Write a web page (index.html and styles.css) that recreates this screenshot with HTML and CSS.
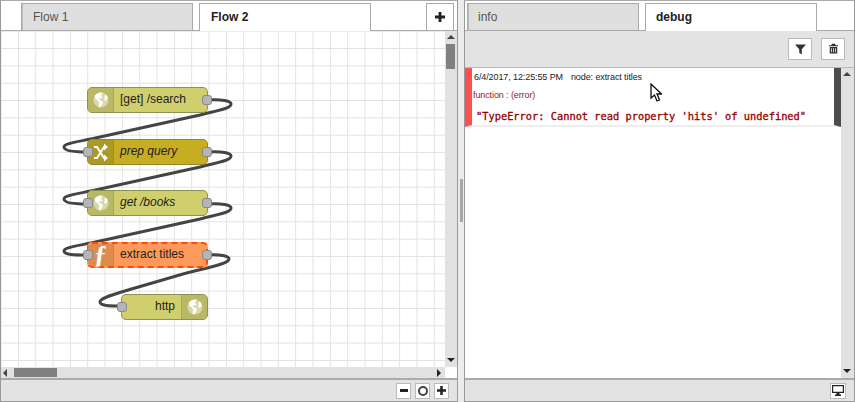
FILE: index.html
```html
<!DOCTYPE html>
<html lang="en">
<head>
<meta charset="utf-8">
<title>Node-RED flow editor</title>
<link rel="stylesheet" href="styles.css">
</head>
<body>
<svg class="defs" width="0" height="0" aria-hidden="true">
  <symbol id="globe" viewBox="0 0 16 16">
    <circle cx="8" cy="8" r="7.6" fill="#fff" opacity=".45"/>
    <path fill="#fff" d="M8 .4a7.600 7.600 0 0 0-6.400 3.500L2.600 7l2.600 1.600 1 2.600-.6 3.600 1.400.8 2.400-3.400.6-2.800-2.800-1.200-1.600-1.600 1.600-.6 1.200.8 1-1.400-1.400-1.200L9.400.5zM11 7.200l1.400 1.800.8-.8 1.400-1.600-.4-2.600-1.600-1.200-1.400 1.600.8 1.400z"/>
  </symbol>
  <symbol id="plus" viewBox="0 0 10 10">
    <path fill="#222" d="M3.600 0h2.800v3.600H10v2.800H6.400V10H3.600V6.400H0V3.600h3.600z"/>
  </symbol>
</svg>
<div class="app">
  <section class="panel left">
    <div class="tabbar">
      <div class="tab inactive">Flow 1</div>
      <div class="tab active">Flow 2</div>
      <button class="add-tab"><svg class="plus-big"><use href="#plus"/></svg></button>
    </div>
    <div class="work">
      <div class="work-main">
        <div class="canvas">
          <svg class="wires" viewBox="1 31 444 336" width="444" height="336">
            <path d="M207 100C222 99 231 101 231 104C231 109 215 111 200 115L100 137C78 142 64 143 64 147C64 151 75 152 87 152"/>
            <path d="M207 152C222 151 231 153 231 156C231 161 215 163 200 167L100 189C78 194 64 195 64 199C64 203 75 204 87 204"/>
            <path d="M207 204C222 203 231 205 231 208C231 213 215 215 200 219L100 241C78 246 64 247 64 251C64 255 75 255 87 255"/>
            <path d="M207 255C220 254 229 256 229 259C229 264 210 267 183 274L135 288C112 295 100 298 100 302C100 306 110 306 121 306"/>
          </svg>
          <div class="node n-search inject">
            <span class="icon"><svg class="globe"><use href="#globe"/></svg></span>
            <span class="label">[get] /search</span>
            <i class="port out"></i>
          </div>
          <div class="node n-prep change">
            <i class="port in"></i>
            <span class="icon">
              <svg class="shuffle" viewBox="0 0 14 19"><path d="M0 4h3L10 15h1M0 15h3L10 4h1"/><path class="tip" d="M10 .5L14 4l-4 3.500zM10 11.500l4 3.500-4 3.500z"/></svg>
            </span>
            <span class="label em">prep query</span>
            <i class="port out"></i>
          </div>
          <div class="node n-books inject">
            <i class="port in"></i>
            <span class="icon"><svg class="globe"><use href="#globe"/></svg></span>
            <span class="label em">get /books</span>
            <i class="port out"></i>
          </div>
          <div class="node n-extract fn">
            <i class="port in"></i>
            <span class="icon func">ƒ</span>
            <span class="label">extract titles</span>
            <i class="port out"></i>
          </div>
          <div class="node n-http inject rev">
            <i class="port in"></i>
            <span class="label">http</span>
            <span class="icon"><svg class="globe"><use href="#globe"/></svg></span>
          </div>
        </div>
        <div class="vbar">
          <i class="arrow up"></i>
          <div class="vthumb"></div>
          <i class="arrow down"></i>
        </div>
      </div>
      <div class="hrow">
        <div class="hbar">
          <i class="arrow lft"></i>
          <div class="hthumb"></div>
          <i class="arrow rgt"></i>
        </div>
        <div class="corner"></div>
      </div>
    </div>
    <div class="foot foot-left">
      <button class="mini"><span class="minus"></span></button>
      <button class="mini"><span class="ring"></span></button>
      <button class="mini"><svg class="plus-small"><use href="#plus"/></svg></button>
    </div>
  </section>
  <div class="sep"><div class="grip"></div></div>
  <section class="panel right">
    <div class="tabbar">
      <div class="tab inactive">info</div>
      <div class="tab active">debug</div>
    </div>
    <div class="toolbar">
      <button class="tool">
        <svg class="tool-ico" viewBox="0 0 12 12"><path d="M0 1h12L7.400 6.400V12L4.600 10V6.400z"/></svg>
      </button>
      <button class="tool">
        <svg class="tool-ico trash" viewBox="0 0 12 13"><path d="M4 0h4l1 2h3v1.500H0V2h3zM1 4.500h10V13H1zM3 6v5.500h1V6zM5.500 6v5.500h1V6zM8 6v5.500h1V6z" fill-rule="evenodd"/></svg>
      </button>
    </div>
    <div class="debug">
      <div class="messages">
        <div class="msg">
          <div class="meta"><span>6/4/2017, 12:25:55 PM</span><span>node: extract titles</span></div>
          <div class="src">function : (error)</div>
          <div class="payload">"TypeError: Cannot read property 'hits' of undefined"</div>
        </div>
        <svg class="cursor" viewBox="0 0 12 19"><path d="M1 1v14l3.500-3 2.500 6 2.500-1-2.500-6h4.500z"/></svg>
      </div>
      <div class="vbar vbar-debug">
        <i class="arrow up"></i>
        <i class="arrow down"></i>
      </div>
    </div>
    <div class="foot foot-right">
      <button class="mini mini-wide">
        <svg class="monitor" viewBox="0 0 12 11"><path d="M0 0h12v8H7.500v1.500H9V11H3V9.500h1.500V8H0zM1.200 1.200v5.600h9.600V1.200z" fill-rule="evenodd"/></svg>
      </button>
    </div>
  </section>
</div>
</body>
</html>
```

FILE: styles.css
```css
* { box-sizing: border-box; }
html, body { margin: 0; padding: 0; }
body {
  width: 855px;
  height: 402px;
  overflow: hidden;
  background: #fff;
  font-family: "Liberation Sans", Arial, sans-serif;
}
.defs { position: absolute; }
button { padding: 0; margin: 0; font: inherit; cursor: pointer; }

.app { display: flex; width: 855px; height: 402px; }
.panel {
  display: flex;
  flex-direction: column;
  border: 1px solid #999;
  border-top-color: #aaa;
  background: #fff;
}
.left { width: 458px; }
.right { flex: 1; min-width: 0; }
.sep {
  width: 6px;
  display: flex;
  align-items: center;
  justify-content: center;
  background: #ececec;
}
.grip { width: 3px; height: 43px; background: #a6a6a6; margin-top: -2px; }

.tabbar {
  height: 30px;
  flex: none;
  display: flex;
  align-items: flex-end;
  gap: 6px;
  border-bottom: 1px solid #aaa;
}
.left .tabbar { padding-left: 20px; }
.right .tabbar { padding-left: 2px; }
.tab {
  width: 172px;
  height: 27px;
  padding: 6px 0 0 11px;
  font-size: 12px;
  line-height: 14px;
  border: 1px solid #aaa;
  border-bottom: 0;
}
.right .tab { padding-left: 10px; }
.tab.inactive {
  background: #dfdfdf;
  color: #555;
  box-shadow: inset 1px 0 0 #bbb;
}
.tab.active {
  background: #fff;
  color: #222;
  font-weight: bold;
  height: 28px;
  margin-bottom: -1px;
}
.add-tab {
  width: 28px;
  height: 27px;
  margin-left: auto;
  margin-right: 3px;
  display: flex;
  align-items: center;
  justify-content: center;
  background: #fff;
  border: 1px solid #aaa;
  border-bottom: 0;
}
.plus-big { width: 10px; height: 10px; }
.plus-small { width: 9px; height: 9px; }

.work { flex: 1; min-height: 0; display: flex; flex-direction: column; }
.work-main { flex: 1; min-height: 0; display: flex; }
.canvas {
  position: relative;
  flex: 1;
  overflow: hidden;
  background-color: #fff;
  background-image:
    linear-gradient(#e2e2e2 1.3px, transparent 1.3px),
    linear-gradient(90deg, #e2e2e2 1.3px, transparent 1.3px);
  background-size: 17.33px 17.33px;
  background-position: -0.4px -0.3px;
}
.wires { position: absolute; left: 0; top: 0; }
.wires path { fill: none; stroke: #444; stroke-width: 3; }

.node {
  position: absolute;
  display: flex;
  align-items: stretch;
  height: 26px;
  border: 1px solid #8f8f5a;
  border-radius: 5px;
  font-size: 12px;
  color: #222;
}
.n-search { left: 86px; top: 56px; width: 121px; }
.n-prep { left: 86px; top: 108px; width: 121px; }
.n-books { left: 86px; top: 159px; width: 121px; }
.n-extract { left: 86px; top: 211px; width: 121px; }
.n-http { left: 120px; top: 263px; width: 87px; }

.inject { background: #cfcf6e; }
.inject .icon { background: #b8b865; }
.change { background: #c6ad22; border-color: #94852f; }
.change .icon { background: #ac9a26; }
.fn {
  background: #fd9a5b;
  border: 2px dashed #ff4a0c;
}
.fn .icon { background: #dd8c50; margin-left: -1px; }

.icon {
  flex: none;
  width: 26px;
  display: flex;
  align-items: center;
  justify-content: center;
  border-radius: 4px 0 0 4px;
  border-right: 1px solid rgba(0, 0, 0, .08);
}
.rev .icon { border-radius: 0 4px 4px 0; border-right: 0; border-left: 1px solid rgba(0, 0, 0, .08); }
.label { flex: 1; padding-left: 6px; line-height: 23px; white-space: nowrap; }
.em { font-style: italic; }
.rev .label { text-align: right; padding: 0 6px 0 0; }
.fn .label { line-height: 21px; }
.globe { width: 16px; height: 16px; }
.shuffle { width: 14px; height: 19px; }
.shuffle path { fill: none; stroke: #fff; stroke-width: 2; }
.shuffle .tip { fill: #fff; stroke: none; }
.func {
  color: #fff;
  font-family: "Liberation Serif", serif;
  font-weight: bold;
  font-size: 26px;
  line-height: 22px;
}
.port {
  position: absolute;
  top: 7px;
  width: 10px;
  height: 10px;
  border-radius: 3px;
  background: #b5b5b5;
  border: 1px solid #888;
}
.port.out { right: -5px; }
.port.in { left: -5px; }
.fn .port { top: 6px; }
.fn .port.out { right: -6px; }
.fn .port.in { left: -6px; }

.vbar {
  position: relative;
  flex: none;
  width: 12px;
  background: #e1e1e1;
}
.vthumb {
  position: absolute;
  left: 1px;
  top: 13px;
  width: 9px;
  height: 25px;
  background: #808080;
}
.hrow { flex: none; height: 11px; display: flex; }
.hbar { position: relative; flex: 1; background: #e1e1e1; }
.hthumb {
  position: absolute;
  left: 13px;
  top: 1px;
  width: 43px;
  height: 9px;
  background: #808080;
}
.corner { width: 12px; background: #fff; }
.arrow { position: absolute; width: 0; height: 0; border: 0 solid transparent; }
.up { top: 4px; left: 2px; border-width: 0 4px 4px; border-bottom-color: #444; }
.down { bottom: 5px; left: 2px; border-width: 4px 4px 0; border-top-color: #222; }
.lft { left: 2px; top: 2px; border-width: 4px 4px 4px 0; border-right-color: #444; }
.rgt { right: 4px; top: 2px; border-width: 4px 0 4px 4px; border-left-color: #222; }

.foot {
  flex: none;
  height: 23px;
  display: flex;
  align-items: center;
  justify-content: flex-end;
  background: #e3e3e3;
  border-top: 2px solid #aaa;
}
.foot-left { padding-right: 8px; gap: 4px; }
.foot-right { padding-right: 8px; }
.mini {
  width: 15px;
  height: 16px;
  display: flex;
  align-items: center;
  justify-content: center;
  background: #fff;
  border: 1px solid #bbb;
}
.mini-wide { width: 16px; }
.minus { width: 8px; height: 3px; background: #222; }
.ring { width: 10px; height: 10px; border: 2px solid #444; border-radius: 50%; }
.monitor { width: 12px; height: 11px; fill: #222; }

.toolbar {
  flex: none;
  height: 37px;
  display: flex;
  align-items: center;
  justify-content: flex-end;
  gap: 9px;
  padding: 0 9px 1px 0;
  background: #e3e3e3;
  border-bottom: 1px solid #bbb;
}
.tool {
  width: 24px;
  height: 22px;
  display: flex;
  align-items: center;
  justify-content: center;
  background: #fff;
  border: 1px solid #bbb;
}
.tool-ico { width: 11px; height: 12px; fill: #333; }
.tool-ico.trash { width: 9px; height: 11px; }

.debug { flex: 1; min-height: 0; display: flex; }
.messages { position: relative; flex: 1; min-width: 0; }
.msg {
  height: 59px;
  padding: 3px 0 0 1px;
  border-left: 7px solid #ff5050;
  border-right: 7px solid #4d4d4d;
  border-bottom: 2px solid #eee;
  color: #222;
}
.meta {
  display: flex;
  gap: 8px;
  font-size: 9px;
  line-height: 13px;
  padding-left: 1px;
  letter-spacing: -.1px;
}
.src {
  margin-top: 5px;
  font-size: 9px;
  line-height: 13px;
  color: #8b1d1d;
  letter-spacing: -.1px;
}
.payload {
  margin-top: 7px;
  padding-left: 3px;
  font-family: "DejaVu Sans Mono", monospace;
  font-size: 10.35px;
  line-height: 14px;
  color: #990000;
  white-space: nowrap;
  -webkit-text-stroke: .3px #990000;
}
.cursor {
  position: absolute;
  left: 185px;
  top: 15px;
  width: 12px;
  height: 19px;
  fill: #fff;
  stroke: #111;
  stroke-width: 1.300;
}
.vbar-debug { width: 13px; }
```
